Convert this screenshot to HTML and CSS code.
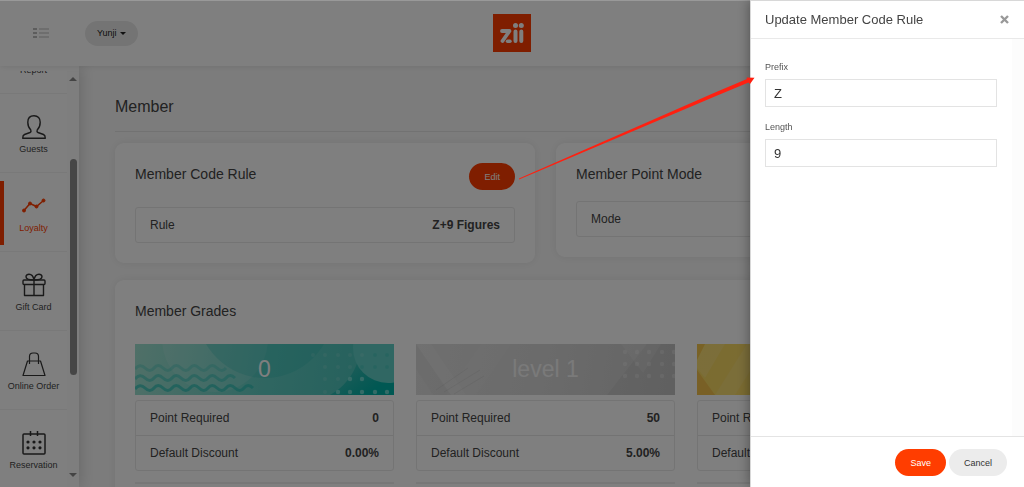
FILE: index.html
```
<!DOCTYPE html>
<html lang="en">
<head>
    <meta charset="UTF-8">
    <title>Member</title>
    <link rel="stylesheet" href="styles.css">
</head>
<body>
    <div class="page">
        <header class="topbar">
            <button class="menu-toggle" aria-label="Menu">
                <svg width="16" height="10" viewBox="0 0 16 10" fill="none">
                    <path d="M0 1h4M0 5h4M0 9h4" stroke="#777"/>
                    <path d="M6 1h10M6 5h10M6 9h10" stroke="#bbb"/>
                </svg>
            </button>
            <button class="store">Yunji <span class="caret"></span></button>
            <a class="logo" href="#" aria-label="zii">
                <svg width="38" height="38" viewBox="0 0 38 38">
                    <rect width="38" height="38" fill="#ff3d00"/>
                    <g fill="none" stroke="#fff" stroke-linecap="round" stroke-linejoin="round">
                        <path d="M9 17h7.500L9.500 27" stroke-width="3.800"/>
                        <path d="M14.500 27.200h2.500" stroke-width="3.400"/>
                        <path d="M22.500 17.500v9.500M28.300 17.500v9.500" stroke-width="4"/>
                    </g>
                    <circle cx="22.500" cy="11.500" r="2.500" fill="#fff"/>
                    <circle cx="28.300" cy="11.500" r="2.500" fill="#fff"/>
                </svg>
            </a>
        </header>

        <div class="layout">
            <nav class="sidebar">
                <div class="nav-list">
                    <a class="nav-item" href="#">
                        <svg width="24" height="24" viewBox="0 0 24 24"></svg>
                        <span>Report</span>
                    </a>
                    <a class="nav-item" href="#">
                        <svg width="24" height="24" viewBox="0 0 24 24" fill="none" stroke="#333" stroke-width="1.400" stroke-linejoin="round">
                            <path d="M12 .7c-4 0-6.200 2.600-6.200 6.500 0 3.500 1.200 6 3 7.800 .5 1.200 .2 2-.8 2.500L2.500 19.500C1 20.200.7 21 .7 23.300h22.600c0-2.300-.3-3.100-1.800-3.800L16 17.500c-1-.5-1.300-1.300-.8-2.500 1.800-1.800 3-4.300 3-7.800 0-3.900-2.200-6.500-6.200-6.500z"/>
                        </svg>
                        <span>Guests</span>
                    </a>
                    <a class="nav-item active" href="#">
                        <svg width="24" height="24" viewBox="0 0 24 24" fill="#ff3d00" stroke="#ff3d00">
                            <path d="M2 16.500l6-7 6.500 3 7-6" fill="none" stroke-width="1.500"/>
                            <circle cx="2" cy="16.500" r="1.500"/>
                            <circle cx="8" cy="9.500" r="1.500"/>
                            <circle cx="14.500" cy="12.500" r="1.500"/>
                            <circle cx="21.500" cy="6.500" r="1.500"/>
                        </svg>
                        <span>Loyalty</span>
                    </a>
                    <a class="nav-item" href="#">
                        <svg width="24" height="24" viewBox="0 0 24 24" fill="none" stroke="#333" stroke-width="1.400" stroke-linejoin="round">
                            <rect x="1" y="7" width="22" height="4.500" rx="1"/>
                            <path d="M2.500 11.500v11h19v-11M12 7v15.500"/>
                            <path d="M12 7C9 7 4 6.500 4 3.800 4 2 5.500 1.200 7 1.200c3 0 4.500 3 5 5.800zM12 7c3 0 8-.5 8-3.200 0-1.800-1.500-2.600-3-2.600-3 0-4.500 3-5 5.800z"/>
                        </svg>
                        <span>Gift Card</span>
                    </a>
                    <a class="nav-item" href="#">
                        <svg width="24" height="24" viewBox="0 0 24 24" fill="none" stroke="#333">
                            <path d="M5.500 9h13L23 23.500H1z" stroke-width="1.200" stroke-linejoin="round"/>
                            <path d="M7.500 12V4.500c0-2.200 1.500-3.500 3.500-3.500h2c2 0 3.500 1.300 3.500 3.500V12" stroke-width="1.200"/>
                        </svg>
                        <span>Online Order</span>
                    </a>
                    <a class="nav-item" href="#">
                        <svg width="24" height="24" viewBox="0 0 24 24" fill="none" stroke="#333" stroke-width="1.500">
                            <rect x="1" y="3" width="22" height="20" rx="1"/>
                            <path d="M8.500 0v5M15.500 0v5"/>
                            <path d="M6 11h0M12 11h0M18 11h0M6 16.800h0M12 16.800h0M18 16.800h0" stroke-width="3.200" stroke-linecap="round"/>
                        </svg>
                        <span>Reservation</span>
                    </a>
                </div>
                <div class="scrollbar">
                    <span class="arrow-up"></span>
                    <span class="thumb"></span>
                    <span class="arrow-down"></span>
                </div>
            </nav>

            <main class="content">
                <h1>Member</h1>
                <div class="cards">
                    <section class="card">
                        <div class="card-head">
                            <h2>Member Code Rule</h2>
                            <button class="btn primary">Edit</button>
                        </div>
                        <dl class="rows">
                            <div><dt>Rule</dt><dd>Z+9 Figures</dd></div>
                        </dl>
                    </section>
                    <section class="card">
                        <h2>Member Point Mode</h2>
                        <dl class="rows">
                            <div><dt>Mode</dt><dd></dd></div>
                        </dl>
                    </section>
                </div>

                <section class="card grades-card">
                    <h2>Member Grades</h2>
                    <div class="grades">
                        <div class="grade">
                            <div class="banner teal">
                                <svg class="banner-art" viewBox="0 0 259 51" preserveAspectRatio="none">
                                    <defs>
                                        <linearGradient id="deep" x1="0" y1="0" x2="1" y2="1">
                                            <stop offset=".2" stop-color="#00a59c" stop-opacity="0"/>
                                            <stop offset=".8" stop-color="#00b0a6"/>
                                        </linearGradient>
                                    </defs>
                                    <circle cx="80" cy="-5" r="53" fill="#fff" opacity=".1"/>
                                    <circle cx="130" cy="-34" r="68" fill="#1fb5ad" opacity=".25"/>
                                    <path d="M195 51C215 40 225 20 226 0h33v51z" fill="url(#deep)"/>
                                    <circle cx="253" cy="4" r="35" fill="#60cfc6"/>
                                    <g fill="#fff" opacity=".1">
                                        <circle cx="178" cy="11" r="2"/><circle cx="190" cy="11" r="2"/><circle cx="203" cy="11" r="2"/><circle cx="215" cy="11" r="2"/><circle cx="227" cy="11" r="2"/>
                                        <circle cx="190" cy="23" r="2"/><circle cx="203" cy="23" r="2"/><circle cx="215" cy="23" r="2"/>
                                        <circle cx="190" cy="35" r="2"/><circle cx="203" cy="35" r="2"/><circle cx="190" cy="48" r="2"/>
                                    </g>
                                    <g fill="#2bbdb4" opacity=".3">
                                        <circle cx="240" cy="11" r="2"/><circle cx="252" cy="11" r="2"/><circle cx="227" cy="23" r="2"/><circle cx="240" cy="23" r="2"/><circle cx="252" cy="23" r="2"/>
                                    </g>
                                    <g fill="#7fe0d8" opacity=".8">
                                        <circle cx="215" cy="35" r="2.200"/><circle cx="227" cy="35" r="2.200"/>
                                        <circle cx="203" cy="48" r="2.200"/><circle cx="215" cy="48" r="2.200"/><circle cx="227" cy="48" r="2.200"/><circle cx="240" cy="48" r="2.200"/><circle cx="252" cy="48" r="2.200"/>
                                    </g>
                                    <g fill="none" stroke="#2bbdb4" stroke-width="3">
                                        <path d="M0 25q5-6 10-1t9 0 9 0 9 0 9 0 9 0 9 0 9 0 9 0 9 0" opacity=".3"/>
                                        <path d="M0 35q5-6 10-1t9 0 9 0 9 0 9 0 9 0 9 0 9 0 9 0 9 0 9 0" opacity=".5"/>
                                        <path d="M0 45q5-6 10-1t9 0 9 0 9 0 9 0 9 0 9 0 9 0 9 0 9 0 9 0 9 0 9 0" opacity=".7"/>
                                    </g>
                                </svg>
                                <span>0</span>
                            </div>
                            <dl class="rows">
                                <div><dt>Point Required</dt><dd>0</dd></div>
                                <div><dt>Default Discount</dt><dd>0.00%</dd></div>
                            </dl>
                            <div class="next"></div>
                        </div>
                        <div class="grade">
                            <div class="banner silver">
                                <svg class="banner-art" viewBox="0 0 259 51" preserveAspectRatio="none">
                                    <path d="M0 0h15l35 51H17L0 25z" fill="#fff" opacity=".12"/>
                                    <path d="M0 0l35 51H17L0 25z" fill="#999" opacity=".12"/>
                                    <path d="M65 0h30L60 51H30z" fill="#fff" opacity=".06"/>
                                    <path d="M20 46l32-22M28 48l36-22M38 50l30-18" stroke="#999" opacity=".15"/>
                                    <path d="M191 51l40-51h28v51z" fill="#888" opacity=".12"/>
                                    <path d="M205 0h40l-18 29z" fill="#fff" opacity=".12"/>
                                    <g fill="#fff" opacity=".25">
                                        <circle cx="209" cy="8" r="2.200"/><circle cx="221" cy="8" r="2.200"/><circle cx="233" cy="8" r="2.200"/><circle cx="246" cy="8" r="2.200"/><circle cx="258" cy="8" r="2.200"/>
                                        <circle cx="209" cy="20" r="2.200"/><circle cx="221" cy="20" r="2.200"/><circle cx="233" cy="20" r="2.200"/><circle cx="246" cy="20" r="2.200"/><circle cx="258" cy="20" r="2.200"/>
                                        <circle cx="209" cy="32" r="2.200"/><circle cx="221" cy="32" r="2.200"/><circle cx="233" cy="32" r="2.200"/><circle cx="246" cy="32" r="2.200"/><circle cx="258" cy="32" r="2.200"/>
                                    </g>
                                </svg>
                                <span>level 1</span>
                            </div>
                            <dl class="rows">
                                <div><dt>Point Required</dt><dd>50</dd></div>
                                <div><dt>Default Discount</dt><dd>5.00%</dd></div>
                            </dl>
                            <div class="next"></div>
                        </div>
                        <div class="grade">
                            <div class="banner gold">
                                <svg class="banner-art" viewBox="0 0 259 51" preserveAspectRatio="none">
                                    <path d="M0 26l18 25H0z" fill="#f0b040" opacity=".6"/>
                                    <path d="M0 0h8L0 16z" fill="#f0b840" opacity=".6"/>
                                    <path d="M8 0h20L8 34 0 24V16z" fill="#fff" opacity=".12"/>
                                    <path d="M50 0h20L38 51H18z" fill="#fff" opacity=".1"/>
                                </svg>
                            </div>
                            <dl class="rows">
                                <div><dt>Point Required</dt><dd></dd></div>
                                <div><dt>Default Discount</dt><dd></dd></div>
                            </dl>
                            <div class="next"></div>
                        </div>
                    </div>
                </section>
            </main>
        </div>
    </div>

    <div class="overlay"></div>

    <form class="drawer">
        <div class="drawer-head">
            <h2>Update Member Code Rule</h2>
            <button type="button" class="close" aria-label="Close">
                <svg width="9" height="9" viewBox="0 0 9 9" stroke="#999" stroke-width="2.400">
                    <path d="M1 1l7 7M8 1l-7 7"/>
                </svg>
            </button>
        </div>
        <div class="drawer-body">
            <div class="form-group">
                <label for="prefix">Prefix</label>
                <input type="text" id="prefix" value="Z">
            </div>
            <div class="form-group">
                <label for="length">Length</label>
                <input type="text" id="length" value="9">
            </div>
        </div>
        <div class="drawer-foot">
            <button type="button" class="btn primary">Save</button>
            <button type="button" class="btn">Cancel</button>
        </div>
    </form>

    <svg class="pointer" width="237" height="104" viewBox="0 0 237 104" fill="#ff2010">
        <path d="M0 102.500L196 16.500 228 3 227.500 1.500 235.500 1.700 231 8 229.500 6.500 197 20 0 103.500z"/>
    </svg>
</body>
</html>
```
FILE: styles.css
```
* {
    box-sizing: border-box;
}
body {
    margin: 0;
    font-family: "Liberation Sans", Arial, sans-serif;
    font-size: 12px;
    color: #444;
    background: #fff;
    overflow: hidden;
}
h1, h2, dl, dd {
    margin: 0;
}
h1, h2 {
    font-weight: normal;
}
a {
    color: inherit;
    text-decoration: none;
}
button {
    font-family: inherit;
    border: none;
    background: none;
    padding: 0;
    cursor: pointer;
}
.page {
    height: 100vh;
    display: flex;
    flex-direction: column;
}
.topbar {
    flex: none;
    position: relative;
    z-index: 2;
    display: grid;
    grid-template-columns: 1fr auto 1fr;
    grid-template-areas: "menu logo .";
    align-items: center;
    height: 66px;
    background: #fff;
    box-shadow: 0 0 6px rgba(0, 0, 0, 0.12);
}
.menu-toggle {
    grid-area: menu;
    justify-self: start;
    display: flex;
    margin-left: 33px;
}
.store {
    grid-area: menu;
    justify-self: start;
    display: flex;
    align-items: center;
    gap: 3px;
    height: 25px;
    margin-left: 85px;
    padding: 0 12px;
    border-radius: 13px;
    background: #e9e9e9;
    font-size: 9px;
    color: #222;
}
.caret {
    border: 3px solid transparent;
    border-top-color: #222;
    border-bottom: none;
}
.logo {
    grid-area: logo;
    display: flex;
}
.layout {
    flex: 1;
    min-height: 0;
    display: flex;
}
.sidebar {
    flex: none;
    position: relative;
    z-index: 1;
    width: 79px;
    display: flex;
    padding-top: 5px;
    background: #fff;
    box-shadow: 0 0 16px rgba(0, 0, 0, 0.2);
}
.nav-list {
    flex: 1;
    overflow: hidden;
}
.nav-item {
    display: flex;
    flex-direction: column;
    align-items: center;
    height: 79px;
    padding-top: 21px;
    border-bottom: 1px solid #f2f2f2;
    font-size: 9px;
    line-height: 12px;
    white-space: nowrap;
}
.nav-item:first-child {
    margin-top: -56px;
}
.nav-item span {
    margin-top: 4px;
}
.nav-item.active {
    color: #ff3d00;
    background: linear-gradient(#ff3d00, #ff3d00) 0 8px / 4px 64px no-repeat;
}
.scrollbar {
    display: flex;
    flex-direction: column;
    align-items: center;
    width: 12px;
    padding: 6px 0 10px;
    background: #fcfcfc;
}
.arrow-up, .arrow-down {
    border: 4px solid transparent;
}
.arrow-up {
    border-top: none;
    border-bottom-color: #888;
}
.arrow-down {
    margin-top: auto;
    border-bottom: none;
    border-top-color: #888;
}
.thumb {
    width: 7px;
    height: 54%;
    margin-top: 78px;
    border-radius: 4px;
    background: #8c8c8c;
}
.content {
    flex: 1;
    padding: 30px 48px 0 36px;
    background: #f9f9f9;
}
h1 {
    padding-bottom: 13px;
    border-bottom: 1px solid #e4e4e4;
    font-size: 16px;
    line-height: 22px;
}
.card {
    padding: 20px;
    border-radius: 9px;
    background: #fff;
    box-shadow: 0 0 10px rgba(0, 0, 0, 0.08);
}
.card h2 {
    font-size: 14px;
    line-height: 22px;
}
.cards {
    display: grid;
    grid-template-columns: 1fr 1fr;
    align-items: start;
    gap: 21px;
    margin: 11px 0 17px;
}
.card-head {
    display: flex;
    justify-content: space-between;
    margin-bottom: 17px;
}
.card > h2 {
    margin-bottom: 16px;
}
.btn {
    height: 27px;
    padding: 0 15px;
    border-radius: 14px;
    background: #ececec;
    font-size: 9px;
    color: #333;
}
.btn.primary {
    background: #ff3d00;
    color: #fff;
}
.rows {
    border: 1px solid #e9e9e9;
    border-radius: 3px;
}
.rows div {
    display: flex;
    justify-content: space-between;
    padding: 0 14px;
    line-height: 34px;
}
.rows div + div {
    border-top: 1px solid #e6e6e6;
}
dd {
    font-weight: bold;
}
.grades {
    display: grid;
    grid-template-columns: repeat(3, 1fr);
    gap: 22px;
}
.grades-card > h2 {
    margin-bottom: 22px;
}
.banner {
    position: relative;
    display: flex;
    align-items: center;
    justify-content: center;
    height: 51px;
    margin-bottom: 5px;
    font-size: 23px;
    color: #fff;
}
.banner span {
    position: relative;
}
.banner-art {
    position: absolute;
    width: 100%;
    height: 100%;
}
.teal {
    background: linear-gradient(100deg, #a0e0d0, #60cdc3 50%, #45bfb7);
}
.silver {
    background: linear-gradient(100deg, #dedede, #d6d6d6 50%, #c8c8c8);
}
.silver span {
    color: #f4f4f4;
}
.gold {
    background: linear-gradient(100deg, #f7d860, #f2d878);
}
.next {
    height: 2px;
    margin-top: 11px;
    background: #eee;
}
.overlay {
    position: fixed;
    inset: 0;
    z-index: 10;
    border-top: 1px solid #999;
    background: rgba(0, 0, 0, 0.5);
}
.drawer {
    position: fixed;
    top: 0;
    right: 0;
    bottom: 0;
    z-index: 11;
    display: flex;
    flex-direction: column;
    width: 274px;
    border-top: 1px solid #d8d8d8;
    border-left: 1px solid #d8d8d8;
    background: #fff;
    box-shadow: 0 0 12px rgba(0, 0, 0, 0.4);
}
.drawer-head {
    display: flex;
    justify-content: space-between;
    align-items: center;
    height: 38px;
    padding: 0 15px 0 14px;
    border-bottom: 1px solid #e9e9e9;
}
.drawer-head h2 {
    font-size: 13px;
    color: #444;
}
.close {
    display: flex;
}
.drawer-body {
    flex: 1;
    padding: 22px 15px 0 14px;
    border-right: 12px solid #fcfcfc;
}
.form-group {
    margin-bottom: 14px;
}
label {
    display: block;
    margin-bottom: 6px;
    font-size: 9px;
    line-height: 12px;
    color: #555;
}
input {
    display: block;
    width: 100%;
    height: 28px;
    padding: 0 8px;
    border: 1px solid #e3e3e3;
    font-family: inherit;
    font-size: 13px;
    color: #333;
}
.drawer-foot {
    display: flex;
    justify-content: flex-end;
    gap: 3px;
    padding: 12px 17px 11px;
    border-top: 1px solid #e4e4e4;
}
.pointer {
    position: absolute;
    top: 76px;
    left: 519px;
    z-index: 12;
}
```
